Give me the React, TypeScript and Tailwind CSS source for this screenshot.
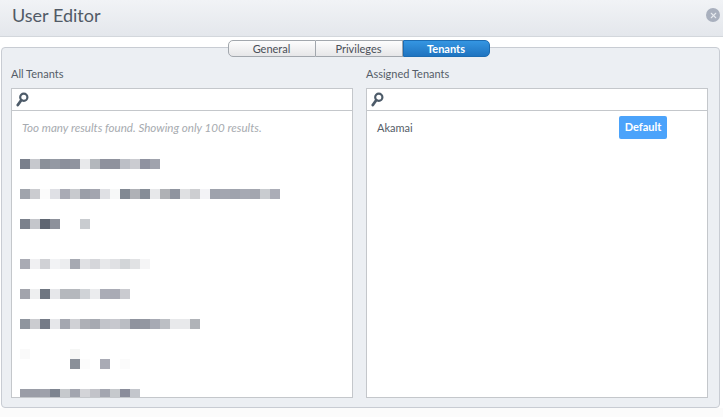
import { X } from 'lucide-react';

// redacted tenant names, one array per 10px line of the mosaic
const _ = '';
const mosaic: string[][] = [
  ['#7a808c', '#c6c8cd', '#8a9099', '#9499a3', '#8b8f9b', '#90949f', '#e8e9eb', '#b3b7bc', '#8e919d', '#8f929d', '#bcbfc6', '#cbccd1', '#8f92a0', '#a0a3ad'],
  [],
  [],
  ['#a0a4ac', '#cbccd0', '#fbfbfb', '#dfe0e5', '#a9abb5', '#c8cace', '#9a9ea8', '#a3a5af', '#dfe0e4', '#f7f8f8', '#828993', '#afb1b6', '#868d97', '#e7e8ea', '#afb1b5', '#8f949f', '#dfe0e2', '#cdced1', '#f3f3f6', '#9ea2ac', '#a3a6b0', '#9fa3ad', '#a6a9b3', '#a3a6af', '#c9ccd0', '#abadb7'],
  [],
  [],
  ['#7b818c', '#c4c6cb', '#5f6672', '#8d919b', _, _, '#c9ccd0'],
  [],
  [],
  [],
  ['#a9abb4', '#f0f0f2', '#d0d1d5', '#f2f3f5', '#ecedef', '#a6a9b2', '#e0e1e4', '#d5d6da', '#e7e8ea', '#e0e1e4', '#d2d5d8', '#e1e2e4', '#f5f5f6'],
  [],
  [],
  ['#a2a4ac', '#eeeff0', '#6f7681', '#e6e7ea', '#b5b8bd', '#b5b8bd', '#d0d3d7', '#ebecee', '#aaacb6', '#a9abb5', '#cacbd0'],
  [],
  [],
  ['#8f959e', '#cbccd0', '#757b87', '#e6e7ea', '#a4a7b0', '#d0d1d5', '#aeb0b6', '#a6a9b1', '#c2c4ca', '#c7c8ce', '#babdc3', '#8f939e', '#9397a1', '#a7aab4', '#bcbfc4', '#e8e9eb', '#e8e9eb', '#b0b3b8'],
  [],
  [],
  ['#fafafa', _, _, _, _, '#f6f7f6'],
  [_, _, _, _, _, '#8a9099', '#fcfcfc', _, '#a9abb5', _, '#fbfbfb'],
  [],
  [],
  ['#9a9da7', '#9a9da7', '#9ea1ab', '#7d8490', '#c6c9cd', '#a2a5af', '#d3d4d8', '#c2c3c9', '#a3a6b0', '#c6c9cd', '#8a8d9b', '#c3c6cc'],
];

function SearchIcon() {
  return (
    <svg width="13" height="15" viewBox="0 0 13 15" fill="none" className="text-[#4d5b69]">
      <circle cx="7.8" cy="5.2" r="3.6" stroke="currentColor" strokeWidth="2.2" />
      <path d="M5.2 8.2 1.8 13" stroke="currentColor" strokeWidth="2.8" strokeLinecap="round" />
    </svg>
  );
}

function TenantBox({ label, children }: { label: string; children: React.ReactNode }) {
  return (
    <div className="w-[342px] flex flex-col">
      <h3 className="text-[11px] leading-[14px] text-[#555d68] mb-[7px]">{label}</h3>
      <div className="h-[310px] bg-white border border-[#c4c7cb] flex flex-col overflow-hidden">
        <div className="h-[22px] shrink-0 border-b border-[#c4c7cb] flex items-center pl-[4px]">
          <SearchIcon />
        </div>
        {children}
      </div>
    </div>
  );
}

export default function App() {
  return (
    <div className="w-[723px] h-[417px] bg-white font-['Lato',sans-serif] overflow-hidden flex flex-col">
      {/* Header */}
      <div className="h-[37px] shrink-0 flex items-center justify-between pl-[12px] pr-[3px] pb-[6px] bg-gradient-to-b from-[#f1f3f6] to-[#e4e7ec] border-b border-[#d3d7dc]">
        <h1 className="text-[18px] leading-[30px] text-[#515a66]">User Editor</h1>
        <div className="w-[14px] h-[14px] rounded-full bg-[#a9b0be] flex items-center justify-center">
          <X className="w-[9px] h-[9px] text-[#e6e9ee]" strokeWidth={3} />
        </div>
      </div>

      {/* Panel */}
      <div className="mt-[10px] ml-[1px] w-[719px] h-[361px] shrink-0 rounded-[4px] border border-[#c8ccd3] bg-[#eceff3]">
        <div className="-mt-[8px] flex justify-center pr-[4px]">
          <div className="flex h-[17px] text-[11px] leading-[16px]">
            <div className="w-[88px] text-center text-[#4a4f58] bg-gradient-to-b from-[#fdfdfd] to-[#e6e6e8] border border-[#a2a7ad] rounded-l-[5px]">General</div>
            <div className="w-[87px] text-center text-[#4a4f58] bg-gradient-to-b from-[#fdfdfd] to-[#e6e6e8] border-y border-r border-[#a2a7ad]">Privileges</div>
            <div className="w-[87px] text-center font-bold text-white bg-gradient-to-b from-[#3596e2] to-[#1f74c0] border border-[#1c6cb2] rounded-r-[5px]">Tenants</div>
          </div>
        </div>

        <div className="flex gap-[13px] pl-[9px] mt-[10px]">
          <TenantBox label="All Tenants">
            <p className="text-[11.6px] leading-[14px] italic text-[#a7abb0] pl-[10px] mt-[10px]">
              Too many results found. Showing only 100 results.
            </p>
            <div className="pl-[8px] mt-[24px]">
              {mosaic.map((line, i) => (
                <div key={i} className="flex h-[10px]">
                  {line.map((color, j) => (
                    <div key={j} className="w-[10px] h-[10px]" style={{ backgroundColor: color || undefined }} />
                  ))}
                </div>
              ))}
            </div>
          </TenantBox>
          <TenantBox label="Assigned Tenants">
            <div className="flex items-center mt-[5px] pl-[10px]">
              <span className="w-[242px] text-[11px] leading-[14px] pt-[1px] text-[#555d68]">Akamai</span>
              <span className="w-[48px] h-[23px] rounded-[2px] bg-[#4ba3fb] text-white text-[11px] font-bold flex items-center justify-center">Default</span>
            </div>
          </TenantBox>
        </div>
      </div>
      <div className="flex-1 bg-[#fbfbfb]" />
    </div>
  );
}
